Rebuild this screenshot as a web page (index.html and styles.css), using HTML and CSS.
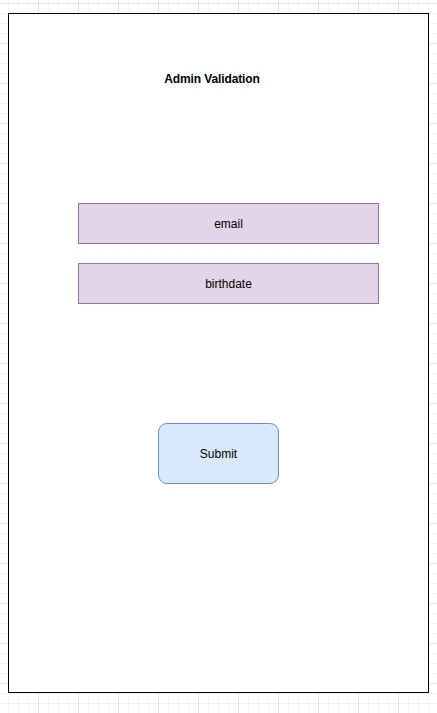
FILE: index.html
```html
<!DOCTYPE html>
<html>
<head>
<meta charset="utf-8">
<link rel="stylesheet" href="styles.css">
</head>
<body>
<div class="frame">
  <div class="title">Admin Validation</div>
  <div class="field field-email">email</div>
  <div class="field field-birth">birthdate</div>
  <div class="submit">Submit</div>
</div>
</body>
</html>
```
FILE: styles.css
```css
html {
  height: 100%;
  background-color: #ffffff;
  background-image:
    linear-gradient(to right, #e4e4e4 1px, transparent 1px),
    linear-gradient(to bottom, #e4e4e4 1px, transparent 1px),
    linear-gradient(to right, #f3f3f3 1px, transparent 1px),
    linear-gradient(to bottom, #f3f3f3 1px, transparent 1px);
  background-size: 40px 40px, 40px 40px, 10px 10px, 10px 10px;
  background-position: 38px 0, 0 3px, 8px 0, 0 3px;
}
body {
  margin: 0;
  padding-top: 13px;
  font-family: "Liberation Sans", Arial, sans-serif;
  font-size: 12px;
  line-height: 14px;
  color: #000;
}
.frame {
  margin-left: 8px;
  width: 421px;
  height: 680px;
  box-sizing: border-box;
  border: 1px solid #000;
  background: #fff;
  display: flex;
  flex-direction: column;
  align-items: flex-start;
}
.title {
  margin-top: 58px;
  margin-left: 143px;
  width: 120px;
  text-align: center;
  font-weight: bold;
  letter-spacing: -0.12px;
}
.field {
  box-sizing: border-box;
  width: 301px;
  height: 41px;
  margin-left: 69px;
  background: #e1d5e7;
  border: 1px solid #9673a6;
  display: flex;
  align-items: center;
  justify-content: center;
}
.field-email {
  margin-top: 117px;
}
.field-birth {
  margin-top: 19px;
}
.submit {
  box-sizing: border-box;
  width: 121px;
  height: 61px;
  margin-top: 119px;
  margin-left: 149px;
  background: #dae8fc;
  border: 1px solid #6c8ebf;
  border-radius: 9px;
  display: flex;
  align-items: center;
  justify-content: center;
}
```
